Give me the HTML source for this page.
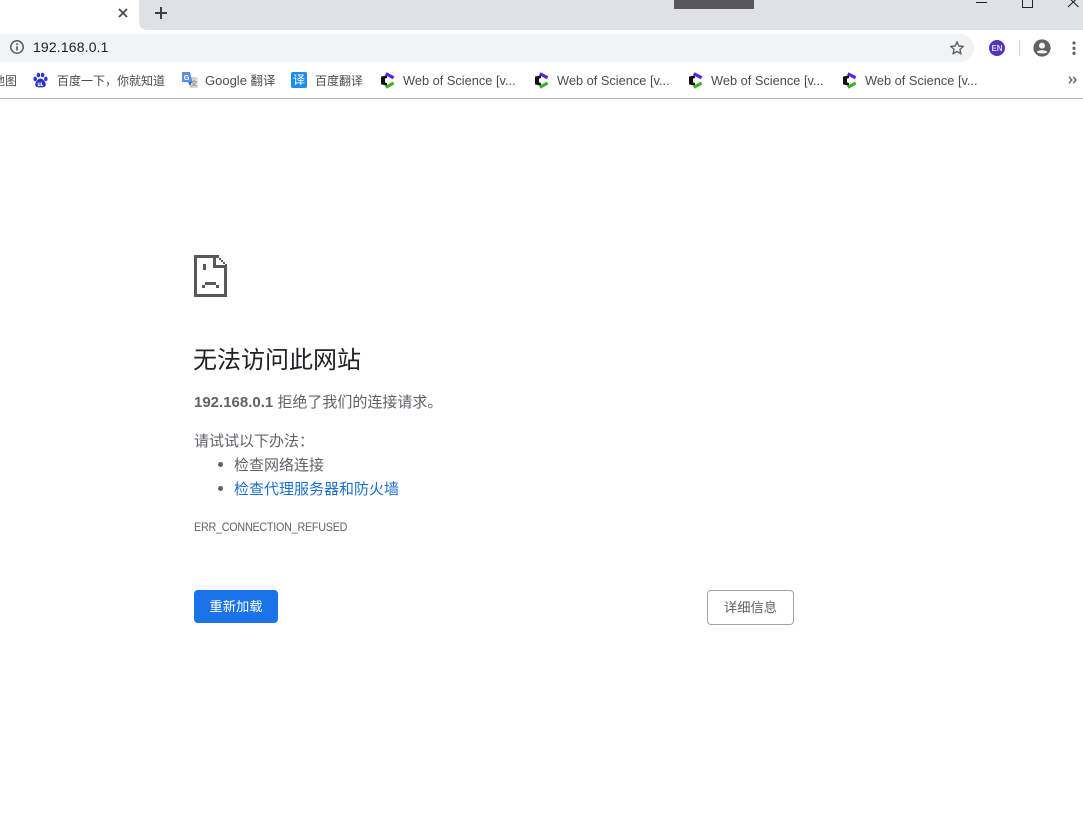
<!DOCTYPE html>
<html lang="zh"><head><meta charset="utf-8"><title>192.168.0.1</title>
<style>
html,body{margin:0;padding:0;background:#fff}
body{width:1083px;height:817px;overflow:hidden;position:relative;font-family:"Liberation Sans","Noto Sans CJK SC",sans-serif}
.a{position:absolute;white-space:nowrap}
.bm{position:absolute;top:72px;font-size:12.8px;line-height:18px;color:#4a4c50;white-space:nowrap}
.c{font-size:12px}
</style></head><body>
<div class="a" style="left:0;top:0;width:1083px;height:30px;background:#dee1e6"></div>
<div class="a" style="left:0;top:0;width:139px;height:30px;background:#fff"></div>
<div class="a" style="left:139px;top:22px;width:8px;height:8px;background:#fff"></div>
<div class="a" style="left:139px;top:14px;width:16px;height:16px;background:#dee1e6;border-bottom-left-radius:8px"></div>
<svg class="a" style="left:116px;top:6px" width="14" height="14" viewBox="0 0 14 14"><path d="M3 3L11 11M11 3L3 11" stroke="#45484c" stroke-width="1.8"/></svg>
<svg class="a" style="left:153px;top:5px" width="16" height="16" viewBox="0 0 16 16"><path d="M8 2V14M2 8H14" stroke="#3c4043" stroke-width="2"/></svg>
<div class="a" style="left:674px;top:0;width:80px;height:9px;background:#58585b"></div>
<div class="a" style="left:976px;top:2px;width:11px;height:1px;background:#222"></div>
<div class="a" style="left:1022px;top:-3px;width:9px;height:9px;border:1px solid #222"></div>
<svg class="a" style="left:1066px;top:0" width="16" height="9" viewBox="0 0 16 9"><path d="M2 -3L12.5 7M12.5 -3L2 7" stroke="#222" stroke-width="1.1" fill="none"/></svg>

<div class="a" style="left:-14px;top:34px;width:988px;height:28px;background:#f1f3f4;border-radius:14px"></div>
<svg class="a" style="left:9px;top:39px" width="16" height="16" viewBox="0 0 16 16"><circle cx="8" cy="8" r="6.2" fill="none" stroke="#55585c" stroke-width="1.5"/><path d="M8 7.2V11.5M8 4.4V6" stroke="#55585c" stroke-width="1.6"/></svg>
<div class="a" style="left:33px;top:38px;font-size:14px;line-height:19px;color:#202124;letter-spacing:.15px">192.168.0.1</div>
<svg class="a" style="left:949px;top:40px" width="16" height="16" viewBox="0 0 16 16"><path d="M8 1.8L9.8 6L14.4 6.4L10.9 9.4L12 13.9L8 11.5L4 13.9L5.1 9.4L1.6 6.4L6.2 6Z" fill="none" stroke="#5f6368" stroke-width="1.4" stroke-linejoin="round"/></svg>
<svg class="a" style="left:989px;top:40px" width="16" height="16" viewBox="0 0 16 16"><circle cx="8" cy="8" r="8" fill="#5434b8"/><text x="8" y="10.8" text-anchor="middle" font-size="8" font-weight="700" fill="#dcd6f5" font-family="Liberation Sans">EN</text></svg>
<div class="a" style="left:1019px;top:40px;width:1px;height:16px;background:#d0d2d5"></div>
<svg class="a" style="left:1033px;top:39px" width="18" height="18" viewBox="0 0 18 18"><circle cx="9" cy="9" r="8.6" fill="#5f6368"/><circle cx="9" cy="6.6" r="3" fill="#f4f4f5"/><path d="M3.7 13C5 10.6 13 10.6 14.3 13C12.8 14.9 5.2 14.9 3.7 13Z" fill="#f4f4f5"/></svg>
<svg class="a" style="left:1071px;top:40px" width="6" height="16" viewBox="0 0 6 16"><circle cx="3" cy="3" r="1.6" fill="#5f6368"/><circle cx="3" cy="8.2" r="1.6" fill="#5f6368"/><circle cx="3" cy="13.4" r="1.6" fill="#5f6368"/></svg>

<div class="bm c" style="left:-7px">地图</div>
<svg class="a" style="left:33px;top:72px" width="15" height="16" viewBox="0 0 15 16"><g fill="#2932c9"><ellipse cx="2.2" cy="7" rx="1.7" ry="2.2"/><ellipse cx="5.4" cy="3" rx="1.7" ry="2.3"/><ellipse cx="9.6" cy="3" rx="1.7" ry="2.3"/><ellipse cx="12.8" cy="7" rx="1.7" ry="2.2"/><path d="M7.5 6.5C5 6.5 2.2 10.2 2.2 12.6C2.2 15 4.4 15.4 7.5 15.4C10.6 15.4 12.8 15 12.8 12.6C12.8 10.2 10 6.5 7.5 6.5Z"/></g><path d="M5.2 10.5V13.4H7V10.5M8.4 10.5V13.4H10" stroke="#fff" stroke-width=".9" fill="none"/></svg>
<div class="bm c" style="left:57px">百度一下，你就知道</div>
<svg class="a" style="left:181px;top:71px" width="17" height="18" viewBox="0 0 17 18"><path d="M7 6H16.5V17H9Z" fill="#d4d6d8"/><path d="M1 1H9L11.5 11H1Z" fill="#5a8ee8"/><path d="M7 11L9 15L11 11Z" fill="#3c6ac4"/><text x="5.5" y="8.8" font-size="7.5" font-weight="700" text-anchor="middle" fill="#fff" font-family="Liberation Sans">G</text><text x="13" y="14.5" font-size="6.5" text-anchor="middle" fill="#777" font-family="Noto Sans CJK SC">文</text></svg>
<div class="bm" style="left:205px;font-size:13px">Google <span style="font-size:12.5px">翻译</span></div>
<div class="a" style="left:291px;top:72px;width:16px;height:16px;background:#1f8ceb;border-radius:2px;color:#fff;font-size:12px;line-height:16px;text-align:center">译</div>
<div class="bm c" style="left:315px">百度翻译</div>

<svg width="0" height="0" style="position:absolute"><defs><symbol id="w" viewBox="0 0 16 17"><path d="M7 3.2L1 4.6V12.4L7 13.8L7 11L5 10.4V6.6L7 6Z" fill="#111"/><path d="M5.8 1.6L13.6 5.8" stroke="#5d22e6" stroke-width="3.2" fill="none"/><path d="M5.8 15.4L13.6 11" stroke="#38b51a" stroke-width="3.2" fill="none"/></symbol></defs></svg>
<svg class="a" style="left:380px;top:72px" width="16" height="17"><use href="#w"/></svg>
<div class="bm" style="left:403px">Web of Science [v...</div>
<svg class="a" style="left:534px;top:72px" width="16" height="17"><use href="#w"/></svg>
<div class="bm" style="left:557px">Web of Science [v...</div>
<svg class="a" style="left:688px;top:72px" width="16" height="17"><use href="#w"/></svg>
<div class="bm" style="left:711px">Web of Science [v...</div>
<svg class="a" style="left:842px;top:72px" width="16" height="17"><use href="#w"/></svg>
<div class="bm" style="left:865px">Web of Science [v...</div>
<svg class="a" style="left:1068px;top:76px" width="10" height="8" viewBox="0 0 10 8"><path d="M1 .8L3.8 4L1 7.2M5.2 .8L8 4L5.2 7.2" fill="none" stroke="#5f6368" stroke-width="1.4"/></svg>
<div class="a" style="left:0;top:98px;width:1083px;height:1px;background:#b8b9ba"></div>

<svg class="a" style="left:194px;top:255px" width="33" height="42" viewBox="0 0 33 42" shape-rendering="crispEdges"><g fill="#58595b">
<rect x="0" y="0" width="3" height="42"/><rect x="0" y="39" width="33" height="3"/><rect x="30" y="12" width="3" height="30"/><rect x="0" y="0" width="25" height="3"/>
<rect x="19" y="0" width="3" height="13"/><rect x="19" y="10" width="14" height="3"/><rect x="25" y="3" width="2" height="2"/><rect x="27" y="5" width="2" height="2"/><rect x="29" y="7" width="2" height="2"/><rect x="31" y="9" width="2" height="3"/>
<rect x="9" y="9" width="3" height="6"/><rect x="11" y="27" width="11" height="3"/><rect x="8" y="30" width="3" height="3"/><rect x="22" y="30" width="3" height="3"/></g></svg>

<div class="a" style="left:193px;top:344px;font-size:24px;line-height:34px;color:#202124">无法访问此网站</div>
<div class="a" style="left:194px;top:392px;font-size:15px;line-height:21px;color:#5f6368"><b>192.168.0.1</b> 拒绝了我们的连接请求。</div>
<div class="a" style="left:194px;top:431px;font-size:15px;line-height:21px;color:#5f6368">请试试以下办法：</div>
<div class="a" style="left:218px;top:462px;width:5px;height:5px;border-radius:50%;background:#5f6368"></div>
<div class="a" style="left:234px;top:455px;font-size:15px;line-height:21px;color:#5f6368">检查网络连接</div>
<div class="a" style="left:218px;top:486px;width:5px;height:5px;border-radius:50%;background:#5f6368"></div>
<div class="a" style="left:234px;top:479px;font-size:15px;line-height:21px;color:#1a6fd0">检查代理服务器和防火墙</div>
<div class="a" style="left:194px;top:519px;font-size:12px;line-height:17px;color:#5f6368;letter-spacing:-.25px;transform:scaleX(.895);transform-origin:0 0">ERR_CONNECTION_REFUSED</div>

<div class="a" style="left:194px;top:590px;width:84px;height:33px;background:#1a73e8;border-radius:4px;color:#fff;font-size:13.3px;line-height:33px;text-align:center">重新加载</div>
<div class="a" style="left:707px;top:590px;width:85px;height:33px;border:1px solid #a0a1a3;border-radius:4px;color:#5f6368;font-size:13.3px;line-height:33px;text-align:center;background:#fff">详细信息</div>
</body></html>
